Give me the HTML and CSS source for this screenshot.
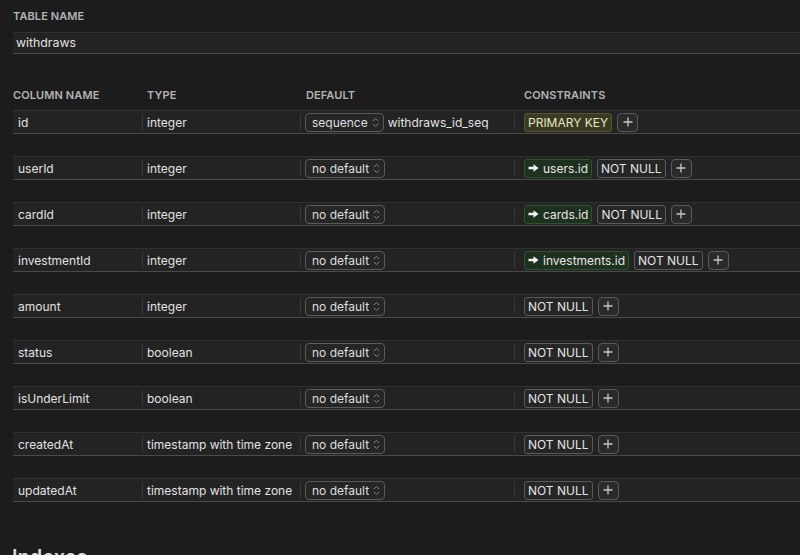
FILE: index.html
```html
<!DOCTYPE html>
<html>
<head>
<meta charset="utf-8">
<link rel="stylesheet" href="styles.css">
</head>
<body>
<div class="page">
  <div class="label">TABLE NAME</div>
  <div class="name-input">withdraws</div>

  <div class="grid head">
    <div class="hcell">COLUMN NAME</div>
    <div class="hcell">TYPE</div>
    <div class="hcell">DEFAULT</div>
    <div class="hcell">CONSTRAINTS</div>
  </div>

  <div class="rows">
    <div class="grid row">
      <div class="cell c1">id</div>
      <div class="cell sep c2">integer</div>
      <div class="cell sep c3"><span class="select">sequence<svg class="chev" viewBox="0 0 10 14"><path d="M2 5.5 L5 2.5 L8 5.5 M2 8.5 L5 11.5 L8 8.5"/></svg></span><span class="seq">withdraws_id_seq</span></div>
      <div class="cell sep c4"><span class="badge pk">PRIMARY KEY</span><span class="plus"><svg viewBox="0 0 12 12"><path d="M6 1.5 V10.5 M1.5 6 H10.5"/></svg></span></div>
    </div>

    <div class="grid row">
      <div class="cell c1">userId</div>
      <div class="cell sep c2">integer</div>
      <div class="cell sep c3"><span class="select">no default<svg class="chev" viewBox="0 0 10 14"><path d="M2 5.5 L5 2.5 L8 5.5 M2 8.5 L5 11.5 L8 8.5"/></svg></span></div>
      <div class="cell sep c4"><span class="badge fk"><svg class="arrow" viewBox="0 0 12 10"><path d="M0.5 3.6 H6 V0.8 L11.5 5 L6 9.2 V6.4 H0.5 Z"/></svg>users.id</span><span class="badge nn">NOT NULL</span><span class="plus"><svg viewBox="0 0 12 12"><path d="M6 1.5 V10.5 M1.5 6 H10.5"/></svg></span></div>
    </div>

    <div class="grid row">
      <div class="cell c1">cardId</div>
      <div class="cell sep c2">integer</div>
      <div class="cell sep c3"><span class="select">no default<svg class="chev" viewBox="0 0 10 14"><path d="M2 5.5 L5 2.5 L8 5.5 M2 8.5 L5 11.5 L8 8.5"/></svg></span></div>
      <div class="cell sep c4"><span class="badge fk"><svg class="arrow" viewBox="0 0 12 10"><path d="M0.5 3.6 H6 V0.8 L11.5 5 L6 9.2 V6.4 H0.5 Z"/></svg>cards.id</span><span class="badge nn">NOT NULL</span><span class="plus"><svg viewBox="0 0 12 12"><path d="M6 1.5 V10.5 M1.5 6 H10.5"/></svg></span></div>
    </div>

    <div class="grid row">
      <div class="cell c1">investmentId</div>
      <div class="cell sep c2">integer</div>
      <div class="cell sep c3"><span class="select">no default<svg class="chev" viewBox="0 0 10 14"><path d="M2 5.5 L5 2.5 L8 5.5 M2 8.5 L5 11.5 L8 8.5"/></svg></span></div>
      <div class="cell sep c4"><span class="badge fk"><svg class="arrow" viewBox="0 0 12 10"><path d="M0.5 3.6 H6 V0.8 L11.5 5 L6 9.2 V6.4 H0.5 Z"/></svg>investments.id</span><span class="badge nn">NOT NULL</span><span class="plus"><svg viewBox="0 0 12 12"><path d="M6 1.5 V10.5 M1.5 6 H10.5"/></svg></span></div>
    </div>

    <div class="grid row">
      <div class="cell c1">amount</div>
      <div class="cell sep c2">integer</div>
      <div class="cell sep c3"><span class="select">no default<svg class="chev" viewBox="0 0 10 14"><path d="M2 5.5 L5 2.5 L8 5.5 M2 8.5 L5 11.5 L8 8.5"/></svg></span></div>
      <div class="cell sep c4"><span class="badge nn">NOT NULL</span><span class="plus"><svg viewBox="0 0 12 12"><path d="M6 1.5 V10.5 M1.5 6 H10.5"/></svg></span></div>
    </div>

    <div class="grid row">
      <div class="cell c1">status</div>
      <div class="cell sep c2">boolean</div>
      <div class="cell sep c3"><span class="select">no default<svg class="chev" viewBox="0 0 10 14"><path d="M2 5.5 L5 2.5 L8 5.5 M2 8.5 L5 11.5 L8 8.5"/></svg></span></div>
      <div class="cell sep c4"><span class="badge nn">NOT NULL</span><span class="plus"><svg viewBox="0 0 12 12"><path d="M6 1.5 V10.5 M1.5 6 H10.5"/></svg></span></div>
    </div>

    <div class="grid row">
      <div class="cell c1">isUnderLimit</div>
      <div class="cell sep c2">boolean</div>
      <div class="cell sep c3"><span class="select">no default<svg class="chev" viewBox="0 0 10 14"><path d="M2 5.5 L5 2.5 L8 5.5 M2 8.5 L5 11.5 L8 8.5"/></svg></span></div>
      <div class="cell sep c4"><span class="badge nn">NOT NULL</span><span class="plus"><svg viewBox="0 0 12 12"><path d="M6 1.5 V10.5 M1.5 6 H10.5"/></svg></span></div>
    </div>

    <div class="grid row">
      <div class="cell c1">createdAt</div>
      <div class="cell sep c2">timestamp with time zone</div>
      <div class="cell sep c3"><span class="select">no default<svg class="chev" viewBox="0 0 10 14"><path d="M2 5.5 L5 2.5 L8 5.5 M2 8.5 L5 11.5 L8 8.5"/></svg></span></div>
      <div class="cell sep c4"><span class="badge nn">NOT NULL</span><span class="plus"><svg viewBox="0 0 12 12"><path d="M6 1.5 V10.5 M1.5 6 H10.5"/></svg></span></div>
    </div>

    <div class="grid row">
      <div class="cell c1">updatedAt</div>
      <div class="cell sep c2">timestamp with time zone</div>
      <div class="cell sep c3"><span class="select">no default<svg class="chev" viewBox="0 0 10 14"><path d="M2 5.5 L5 2.5 L8 5.5 M2 8.5 L5 11.5 L8 8.5"/></svg></span></div>
      <div class="cell sep c4"><span class="badge nn">NOT NULL</span><span class="plus"><svg viewBox="0 0 12 12"><path d="M6 1.5 V10.5 M1.5 6 H10.5"/></svg></span></div>
    </div>
  </div>

  <h2 class="section">Indexes</h2>
</div>
</body>
</html>
```

FILE: styles.css
```css
html, body {
  margin: 0;
  padding: 0;
  background: #1c1c1c;
  overflow: hidden;
}
body {
  font-family: Inter, "Helvetica Neue", Arial, sans-serif;
  font-size: 12px;
  color: #e2e2e2;
  width: 800px;
  height: 555px;
}
.page {
  padding: 9px 0 0 13px;
}
.label {
  font-size: 11px;
  font-weight: 600;
  color: #b4b4b4;
  letter-spacing: 0.1px;
  line-height: 14px;
  height: 14px;
}
.name-input {
  margin-top: 9px;
  height: 20px;
  line-height: 20px;
  padding-left: 3px;
  font-size: 12.3px;
  background: #232323;
  border-top: 1px solid #303030;
  border-bottom: 1px solid #4a4a4a;
}
.grid {
  display: grid;
  grid-template-columns: 129px 158px 214px 1fr;
}
.head {
  margin-top: 34px;
  height: 14px;
  line-height: 14px;
}
.hcell {
  font-size: 11px;
  font-weight: 600;
  color: #b4b4b4;
  letter-spacing: 0.1px;
}
.hcell:nth-child(2) { padding-left: 5px; }
.hcell:nth-child(3) { padding-left: 6px; }
.hcell:nth-child(4) { padding-left: 10px; }
.rows {
  margin-top: 8px;
  display: flex;
  flex-direction: column;
  gap: 22px;
}
.row {
  height: 22px;
  background: #232323;
  border-top: 1px solid #303030;
  border-bottom: 1px solid #4a4a4a;
}
.cell {
  display: flex;
  align-items: center;
  white-space: nowrap;
  min-width: 0;
}
.sep {
  border-left: 1px solid #3a3a3a;
  margin: 3px 0;
}
.c1 { padding-left: 5px; }
.c2 { padding-left: 4px; }
.c3 { padding-left: 4px; }
.c4 { padding-left: 9px; gap: 5px; }
.cell.c2, .cell.c1 { padding-top: 0; }
.select {
  display: inline-flex;
  align-items: center;
  height: 17px;
  margin-top: -4px;
  margin-bottom: -4px;
  padding: 0 3px 0 6px;
  border: 1px solid #5a5a5a;
  border-radius: 4px;
  background: #262626;
  color: #dedede;
}
.chev {
  width: 9px;
  height: 13px;
  margin-left: 3px;
  fill: none;
  stroke: #8a8a8a;
  stroke-width: 1;
}
.seq {
  margin-left: 4px;
  padding-top: 1px;
}
.badge {
  display: inline-flex;
  align-items: center;
  height: 17px;
  margin: -4px 0;
  padding: 0 3px;
  border-radius: 3px;
  border: 1px solid #5a5a5a;
  background: #262626;
  color: #e4e4e4;
}
.pk {
  background: #3a3a22;
  border-color: #55552e;
  color: #e6e6c2;
}
.fk {
  background: #1e311f;
  border-color: #2c522e;
  color: #e6e6e6;
}
.arrow {
  width: 11px;
  height: 10px;
  margin-right: 4px;
  fill: #f0f0f0;
}
.plus {
  display: inline-flex;
  align-items: center;
  justify-content: center;
  width: 19px;
  height: 17px;
  margin: -4px 0;
  border: 1px solid #5a5a5a;
  border-radius: 4px;
  background: #2a2a2a;
}
.plus svg {
  width: 12px;
  height: 12px;
  fill: none;
  stroke: #c8c8c8;
  stroke-width: 1.3;
}
.section {
  margin: 43px 0 0 -1px;
  font-size: 20px;
  font-weight: 600;
  color: #d8d8d8;
}
```
